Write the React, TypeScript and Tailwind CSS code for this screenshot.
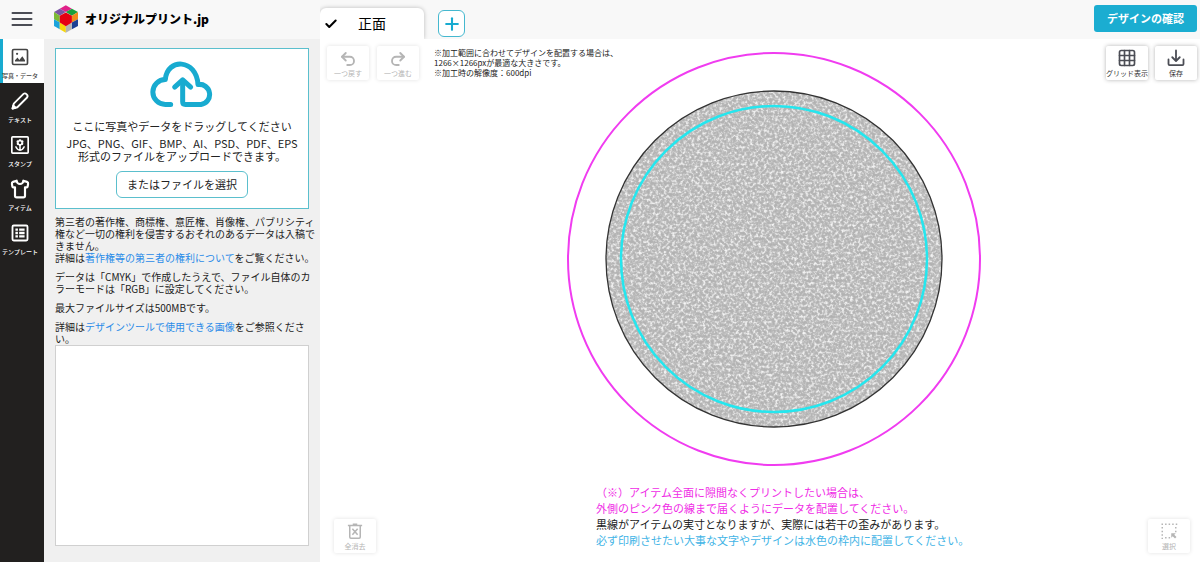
import React, { useState } from "react";
import { Check, Grid3x3, Plus, Redo2, Shirt, Undo2 } from "lucide-react";

type IconProps = { className?: string };

const LogoIcon = ({ className }: IconProps) => (
  <svg viewBox="40 13 73 83" className={className} aria-hidden="true">
    <path fill="#e0218a" d="M76 14 94 24 76 34 58 24Z" />
    <path fill="#7b55a3" d="M41 34 58 24 76 34 58 45Z" />
    <path fill="#18a03c" d="M94 24 112 34 94 45 76 34Z" />
    <path fill="#7dbb35" d="M41 34 58 45V65L41 55Z" />
    <path fill="#1aa3dc" d="M41 55 58 65V85L41 75Z" />
    <path fill="#f7d708" d="M58 65 76 75V95L58 85Z" />
    <path fill="#f08a1c" d="M94 45 112 34V55L94 65Z" />
    <path fill="#1c3f94" d="M94 65 112 55V75L94 85Z" />
    <path fill="#b4b4b4" d="M76 75 94 65V85L76 95Z" />
    <path fill="#e60012" d="M76 35 94 45V65L76 76 58 65V45Z" />
  </svg>
);

const MenuIcon = ({ className }: IconProps) => (
  <svg
    viewBox="0 0 22 16"
    className={className}
    stroke="currentColor"
    strokeWidth="2"
    strokeLinecap="round"
    aria-hidden="true"
  >
    <path d="M1.500 2h19M1.500 8h19M1.500 14h19" />
  </svg>
);

const CloudUploadIcon = ({ className }: IconProps) => (
  <svg
    viewBox="449 182 192 140"
    className={className}
    fill="none"
    stroke="#18abd0"
    strokeWidth="15"
    strokeLinecap="round"
    strokeLinejoin="round"
    aria-hidden="true"
  >
    <path d="M511 312H495A37 37 0 0 1 495 237C500 172 588 174 593 252A30 30 0 1 1 602 312H555Q547 312 547 304V242" />
    <path d="M523 260 547 238 571 260" />
  </svg>
);

const PhotoIcon = ({ className }: IconProps) => (
  <svg viewBox="0 0 24 24" className={className} fill="none" aria-hidden="true">
    <rect x="3" y="3" width="18" height="18" rx="1.5" stroke="currentColor" strokeWidth="2" />
    <path fill="currentColor" d="M6 17.5V16l3-3.5 2.2 3 3.6-4.5L18 16v1.5Z" />
    <circle cx="8.5" cy="8.2" r="1.3" fill="currentColor" />
  </svg>
);

const PencilIcon = ({ className }: IconProps) => (
  <svg
    viewBox="0 0 24 24"
    className={className}
    fill="none"
    stroke="currentColor"
    strokeWidth="2.2"
    strokeLinejoin="round"
    aria-hidden="true"
  >
    <path d="M3 21 4.500 15.200 16.200 3.500Q18 2 20 4T20.500 7.800L8.800 19.500Z" />
    <path d="M3 21 3.900 17.400 6.600 20.100Z" fill="currentColor" />
  </svg>
);

const StampIcon = ({ className }: IconProps) => (
  <svg viewBox="0 0 24 24" className={className} fill="none" aria-hidden="true">
    <rect x="2.200" y="2.200" width="19.600" height="19.600" rx="1" stroke="currentColor" strokeWidth="2" />
    <g fill="currentColor">
      <circle cx="12" cy="6.800" r="1.700" />
      <circle cx="9.500" cy="8" r="1.700" />
      <circle cx="14.500" cy="8" r="1.700" />
      <circle cx="9.700" cy="10.600" r="1.700" />
      <circle cx="14.300" cy="10.600" r="1.700" />
      <circle cx="12" cy="11.800" r="1.700" />
    </g>
    <circle cx="12" cy="9.300" r="1.500" fill="#22201f" />
    <path
      stroke="currentColor"
      strokeWidth="1.800"
      strokeLinecap="round"
      strokeLinejoin="round"
      d="M12 13v5M7 14.200q1.500 3.800 5 4 3.500-.200 5-4"
    />
  </svg>
);

const ShirtIcon = ({ className }: IconProps) => (
  <Shirt className={className} strokeWidth={2.6} />
);

const TemplateIcon = ({ className }: IconProps) => (
  <svg viewBox="0 0 24 24" className={className} fill="none" aria-hidden="true">
    <rect x="3" y="3" width="18" height="18" rx="1.500" stroke="currentColor" strokeWidth="2.200" />
    <path
      fill="currentColor"
      d="M6.500 6.500h3v2.800h-3zM11 6.500h6.500v2.800H11zM6.500 10.600h3v2.800h-3zM11 10.600h6.500v2.800H11zM6.500 14.700h3v2.800h-3zM11 14.700h6.500v2.800H11z"
    />
  </svg>
);

const SaveIcon = ({ className }: IconProps) => (
  <svg
    viewBox="0 0 24 24"
    className={className}
    fill="none"
    stroke="currentColor"
    strokeWidth="2.400"
    strokeLinecap="round"
    strokeLinejoin="round"
    aria-hidden="true"
  >
    <path d="M2 14v6q0 1.500 1.500 1.500h17q1.500 0 1.500-1.500v-6M12 2v13.500M7 11l5 5 5-5" />
  </svg>
);

const ClearIcon = ({ className }: IconProps) => (
  <svg
    viewBox="0 0 24 24"
    className={className}
    fill="none"
    stroke="currentColor"
    strokeWidth="2"
    aria-hidden="true"
  >
    <path d="M2.500 4.500h19M9 3h6M5 4.500V20q0 1.500 1.500 1.500h11q1.500 0 1.500-1.500V4.500M8.500 9l7 8M15.500 9l-7 8" />
  </svg>
);

const SelectIcon = ({ className }: IconProps) => (
  <svg
    viewBox="0 0 24 24"
    className={className}
    fill="none"
    stroke="currentColor"
    strokeWidth="2"
    aria-hidden="true"
  >
    <path strokeDasharray="2 2.750" d="M2 3h21M3 6.750v16M21 6.750v8M6.750 21h8" />
    <path fill="currentColor" stroke="none" d="M15 15h6l-2 2 3 3-2 2-3-3-2 2Z" />
  </svg>
);

const menuItems = [
  { label: "写真・データ", Icon: PhotoIcon },
  { label: "テキスト", Icon: PencilIcon },
  { label: "スタンプ", Icon: StampIcon },
  { label: "アイテム", Icon: ShirtIcon },
  { label: "テンプレート", Icon: TemplateIcon },
];

type ToolButtonProps = {
  label: string;
  disabled?: boolean;
  children: React.ReactNode;
};

const ToolButton = ({ label, disabled, children }: ToolButtonProps) => (
  <button
    type="button"
    disabled={disabled}
    className="pointer-events-auto flex h-[34px] w-[42px] flex-col items-center justify-end rounded-[2px] bg-white pb-0.5 text-[7px] leading-[10px] whitespace-nowrap text-[#333] shadow-[0_0_4px_rgba(0,0,0,0.3)] disabled:text-[#b5b5b5] disabled:shadow-[0_0_4px_rgba(0,0,0,0.12)]"
  >
    {children}
    {label}
  </button>
);

const Header = () => (
  <header className="flex h-[39px] shrink-0 bg-[#f8f8f8]">
    <div className="flex w-80 shrink-0 items-center pb-0.5 pl-[11px]">
      <button type="button" aria-label="メニュー" className="text-[#4b4d55]">
        <MenuIcon className="h-4 w-[22px]" />
      </button>
      <a href="#" className="ml-5 flex items-center gap-1.5">
        <LogoIcon className="h-7 w-[26px]" />
        <span className="text-[12px] font-black text-black">オリジナルプリント.jp</span>
      </a>
    </div>
    <div className="flex items-end overflow-hidden">
      <button
        type="button"
        className="flex h-[31px] w-[104px] items-center gap-5 rounded-t-md bg-white pl-1 text-[14px] text-black shadow-[0_0_4px_rgba(0,0,0,0.25)]"
      >
        <Check className="h-3.5 w-3.5" strokeWidth={3.5} />
        正面
      </button>
      <button
        type="button"
        aria-label="面を追加"
        className="mb-0.5 ml-3.5 flex h-[27px] w-[27px] items-center justify-center rounded-md border border-[#45b8cf] bg-white text-[#18abd0]"
      >
        <Plus className="h-5 w-5" strokeWidth={2.5} />
      </button>
    </div>
    <button
      type="button"
      className="mt-[5px] mr-[3px] ml-auto h-[27px] w-[103px] rounded-[3px] bg-[#1badd1] text-[11px] font-bold text-white"
    >
      デザインの確認
    </button>
  </header>
);

const SideMenu = () => {
  const [selected, setSelected] = useState<string>("写真・データ");

  return (
    <nav className="w-11 shrink-0 bg-[#22201f]">
      {menuItems.map(({ label, Icon }) => (
        <button
          key={label}
          type="button"
          onClick={() => setSelected(label)}
          className={
            "flex h-11 w-full flex-col items-center gap-1 pt-2 text-[6px] leading-[10px] font-medium whitespace-nowrap " +
            (selected === label
              ? "border-l-[3px] border-[#18abd0] bg-white pr-[7px] text-[#444]"
              : "pr-1 text-white")
          }
        >
          <Icon className="h-5 w-5 shrink-0" />
          {label}
        </button>
      ))}
    </nav>
  );
};

const UploadPanel = () => (
  <aside className="flex w-[276px] shrink-0 flex-col bg-[#f0f0f0] px-[11px] pt-[9px] pb-4 text-[#222]">
    <section className="flex h-[161px] shrink-0 flex-col items-center border border-[#5bbfcd] bg-white pt-3 text-center text-[11px] leading-[13px]">
      <CloudUploadIcon className="h-[47px] w-16" />
      <p className="mt-3">ここに写真やデータをドラッグしてください</p>
      <p className="mt-1 whitespace-nowrap">
        JPG、PNG、GIF、BMP、AI、PSD、PDF、EPS
        <br />
        形式のファイルをアップロードできます。
      </p>
      <button
        type="button"
        className="mt-2 h-[27px] w-[132px] rounded-md border border-[#5bbfcd] bg-white"
      >
        またはファイルを選択
      </button>
    </section>
    {/* notes */}
    <div className="mt-[7px] flex flex-col gap-[7px] text-[10px] leading-[12px] whitespace-nowrap">
      <p>
        第三者の著作権、商標権、意匠権、肖像権、パブリシティ
        <br />
        権など一切の権利を侵害するおそれのあるデータは入稿で
        <br />
        きません。
        <br />
        詳細は
        <a href="#" className="text-[#2a8be8]">
          著作権等の第三者の権利について
        </a>
        をご覧ください。
      </p>
      <p>
        データは「CMYK」で作成したうえで、ファイル自体のカ
        <br />
        ラーモードは「RGB」に設定してください。
      </p>
      <p>最大ファイルサイズは500MBです。</p>
      <p>
        詳細は
        <a href="#" className="text-[#2a8be8]">
          デザインツールで使用できる画像
        </a>
        をご参照くださ
        <br />
        い。
      </p>
    </div>
    {/* uploaded files */}
    <div className="min-h-[100px] flex-1 border border-[#d0d0d0] bg-white" />
  </aside>
);

const PrintArea = () => (
  <svg viewBox="0 0 414 414" className="h-[414px] w-[414px]" role="img" aria-label="印刷範囲">
    <defs>
      <filter id="glitter" x="0" y="0" width="100%" height="100%" colorInterpolationFilters="sRGB">
        <feTurbulence type="fractalNoise" baseFrequency="0.36" numOctaves="2" seed="7" />
        <feColorMatrix values="1 0 0 0 0  1 0 0 0 0  1 0 0 0 0  0 0 0 0 1" />
        <feComponentTransfer>
          <feFuncR type="table" tableValues="0.68 0.69 0.7 0.71 0.75 0.85 0.93 0.97 0.98" />
          <feFuncG type="table" tableValues="0.68 0.69 0.7 0.71 0.75 0.85 0.93 0.97 0.98" />
          <feFuncB type="table" tableValues="0.68 0.69 0.7 0.71 0.75 0.85 0.93 0.97 0.98" />
        </feComponentTransfer>
        <feComposite in2="SourceGraphic" operator="in" />
      </filter>
    </defs>
    <circle cx="207" cy="207" r="168" fill="#bbb" filter="url(#glitter)" />
    <circle cx="207" cy="207" r="168" fill="none" stroke="#333" strokeWidth="1.300" />
    <circle cx="207" cy="207" r="153" fill="none" stroke="#25e6ee" strokeWidth="2.500" />
    <circle cx="207" cy="207" r="206" fill="none" stroke="#f03cf0" strokeWidth="2" />
  </svg>
);

const Canvas = () => (
  <main className="grid min-w-0 flex-1 bg-white">
    <div className="col-start-1 row-start-1 flex justify-center pt-[13px] pl-7">
      <div className="w-[414px]">
        <PrintArea />
        <p className="mt-[18px] pl-[29px] text-[11px] leading-4 whitespace-nowrap text-[#222]">
          <span className="text-[#f02ce6]">
            （※）アイテム全面に隙間なくプリントしたい場合は、
            <br />
            外側のピンク色の線まで届くようにデータを配置してください。
          </span>
          <br />
          黒線がアイテムの実寸となりますが、実際には若干の歪みがあります。
          <br />
          <span className="text-[#42b4e6]">
            必ず印刷させたい大事な文字やデザインは水色の枠内に配置してください。
          </span>
        </p>
      </div>
    </div>

    {/* tools laid over the canvas */}
    <div className="pointer-events-none z-10 col-start-1 row-start-1 flex flex-col justify-between pt-[7px] pr-[3px] pb-[9px] pl-[7px]">
      <div className="flex items-start">
        <div className="flex gap-2">
          <ToolButton label="一つ戻す" disabled>
            <Undo2 className="h-[18px] w-[18px]" strokeWidth={2.5} />
          </ToolButton>
          <ToolButton label="一つ進む" disabled>
            <Redo2 className="h-[18px] w-[18px]" strokeWidth={2.5} />
          </ToolButton>
        </div>
        <p className="mt-0.5 ml-[15px] text-[8px] leading-[10px] text-[#222]">
          ※加工範囲に合わせてデザインを配置する場合は、
          <br />
          1266×1266pxが最適な大きさです。
          <br />
          ※加工時の解像度：600dpi
        </p>
        <div className="ml-auto flex gap-[7px]">
          <ToolButton label="グリッド表示">
            <Grid3x3 className="h-5 w-5 text-[#4b4d55]" />
          </ToolButton>
          <ToolButton label="保存">
            <SaveIcon className="mb-px h-[18px] w-[18px] text-[#4b4d55]" />
          </ToolButton>
        </div>
      </div>
      <div className="flex justify-between px-[7px]">
        <ToolButton label="全消去" disabled>
          <ClearIcon className="mb-px h-[18px] w-[18px]" />
        </ToolButton>
        <ToolButton label="選択" disabled>
          <SelectIcon className="mb-px h-[18px] w-[18px]" />
        </ToolButton>
      </div>
    </div>
  </main>
);

const App = () => {
  return (
    <div
      lang="ja"
      className="flex min-h-screen flex-col bg-white font-['Noto_Sans_CJK_JP',sans-serif]"
    >
      <Header />
      <div className="flex flex-1">
        <SideMenu />
        <UploadPanel />
        <Canvas />
      </div>
    </div>
  );
};

export default App;
